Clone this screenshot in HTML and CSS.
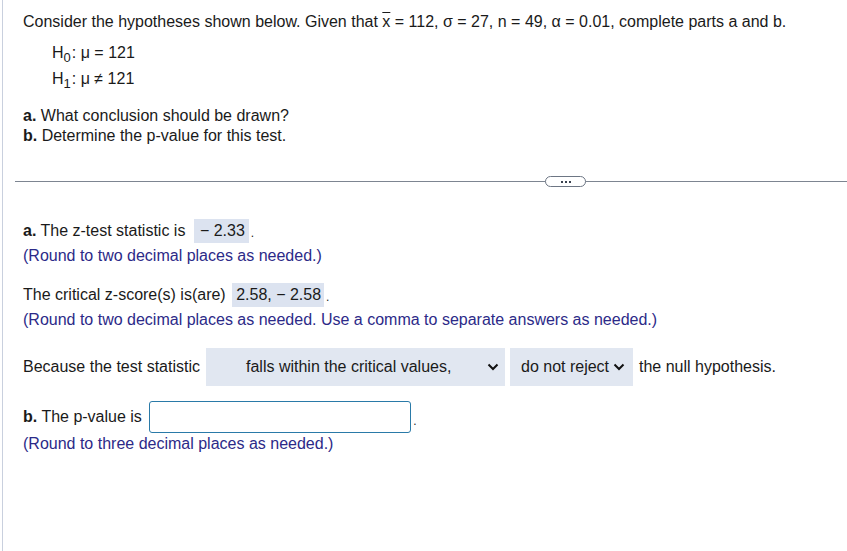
FILE: index.html
```html
<!DOCTYPE html>
<html>
<head>
<meta charset="utf-8">
<link rel="stylesheet" href="styles.css">
</head>
<body>
<div class="page">
  <div class="mark"></div>
  <section class="question">
    <p class="intro">Consider the hypotheses shown below. Given that <span class="xbar">x</span> = 112, σ = 27, n = 49, α = 0.01, complete parts a and b.</p>
    <div class="hyp">
      <div class="hline">H<sub>0</sub>: μ = 121</div>
      <div class="hline">H<sub>1</sub>: μ ≠ 121</div>
    </div>
    <div class="parts">
      <div><b>a.</b> What conclusion should be drawn?</div>
      <div><b>b.</b> Determine the p-value for this test.</div>
    </div>
  </section>
  <div class="divider">
    <span class="more"><i></i><i></i><i></i></span>
  </div>
  <section class="answers">
    <div class="row"><b>a.</b> The z-test statistic is <span class="ans">− 2.33</span><span class="dot">.</span></div>
    <div class="note">(Round to two decimal places as needed.)</div>

    <div class="row r2">The critical z-score(s) is(are) <span class="ans ans2">2.58, − 2.58</span><span class="dot">.</span></div>
    <div class="note">(Round to two decimal places as needed. Use a comma to separate answers as needed.)</div>

    <div class="row r3">
      <span>Because the test statistic</span>
      <span class="select s1">falls within the critical values,<svg class="chev" viewBox="0 0 12 8"><path d="M1.5 1.5l4.5 4.5 4.5-4.5" fill="none" stroke="#111" stroke-width="2"/></svg></span>
      <span class="select s2">do not reject<svg class="chev" viewBox="0 0 12 8"><path d="M1.5 1.5l4.5 4.5 4.5-4.5" fill="none" stroke="#111" stroke-width="2"/></svg></span>
      <span>the null hypothesis.</span>
    </div>

    <div class="row r4"><b>b.</b> The p-value is <span class="input"></span><span class="dot">.</span></div>
    <div class="note n4">(Round to three decimal places as needed.)</div>
  </section>
</div>
</body>
</html>
```
FILE: styles.css
```css
html, body {
  margin: 0;
  padding: 0;
  background: #fff;
}
body {
  font-family: "Liberation Sans", Arial, sans-serif;
  font-size: 16px;
  color: #1a1a1a;
}
.page {
  position: relative;
  height: 551px;
  border-left: 1px solid #c9d0de;
  margin-left: 2px;
  overflow: hidden;
}
.mark {
  position: absolute;
  left: -3px;
  top: 237px;
  width: 2px;
  height: 81px;
  background: #fbf2cf;
}
p { margin: 0; }
.question {
  padding: 13px 0 0 20px;
}
.intro {
  line-height: 18px;
}
.xbar {
  text-decoration: overline;
}
.hyp {
  padding: 9px 0 0 29px;
}
.hline {
  line-height: 26px;
  height: 26px;
}
.hline sub {
  font-size: 13px;
  vertical-align: -4px;
  margin-right: 1px;
  line-height: 0;
}
.parts {
  padding-top: 14px;
  line-height: 20px;
}
.divider {
  margin: 35px 0 0 12px;
  height: 1px;
  background: #7d8591;
  position: relative;
}
.more {
  position: absolute;
  left: 530px;
  top: -5px;
  width: 41px;
  height: 11px;
  box-sizing: border-box;
  border: 1px solid #6d7684;
  border-radius: 6px;
  background: #fff;
  display: flex;
  justify-content: center;
  align-items: center;
  gap: 2px;
}
.more i {
  width: 2px;
  height: 2px;
  background: #3a4250;
}
.answers {
  padding: 37px 0 0 20px;
}
.row {
  display: flex;
  align-items: center;
  white-space: pre;
  height: 24px;
}
.row b { font-weight: bold; }
.ans {
  background: #dce3f0;
  height: 24px;
  line-height: 24px;
  padding: 0 4px 0 6px;
  margin-left: 4px;
}
.ans2 { margin-left: 2px; padding: 0 3px 0 4px; }
.dot {
  font-size: 12px;
  margin-left: 2px;
  padding-top: 4px;
}
.note {
  color: #2c2a88;
  line-height: 20px;
  margin-top: 3px;
}
.r2 { margin-top: 17px; }
.r3 {
  margin-top: 18px;
  height: 38px;
}
.select {
  background: #e1e7f1;
  height: 38px;
  display: flex;
  align-items: center;
}
.s1 {
  width: 299px;
  box-sizing: border-box;
  padding-left: 40px;
  margin-left: 6px;
  position: relative;
}
.s1 .chev { position: absolute; right: 6px; }
.s2 {
  width: 123px;
  box-sizing: border-box;
  padding-left: 11px;
  gap: 4px;
  margin-left: 5px;
  margin-right: 6px;
}
.chev {
  width: 12px;
  height: 8px;
}
.r4 {
  margin-top: 15px;
  height: 32px;
}
.input {
  display: inline-block;
  width: 262px;
  height: 32px;
  box-sizing: border-box;
  border: 1px solid #2a7aa8;
  border-radius: 3px;
  background: #fff;
  margin-left: 3px;
}
.r4 .dot { padding-top: 8px; }
.n4 { margin-top: 1px; }
```
